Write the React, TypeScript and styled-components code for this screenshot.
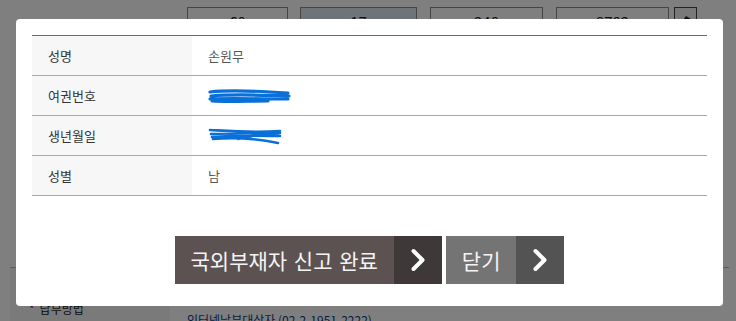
import React from "react";
import styled, { createGlobalStyle } from "styled-components";

const GlobalStyle = createGlobalStyle`
  html, body {
    margin: 0;
    padding: 0;
    background: #ffffff;
    font-family: "Noto Sans CJK KR", "Noto Sans", sans-serif;
    overflow: hidden;
  }
`;

// ---- page behind the dialog ----
const Page = styled.div`
  width: 736px;
  height: 321px;
  display: flex;
  flex-direction: column;
  overflow: hidden;
`;

const PhoneRow = styled.div`
  display: flex;
  align-items: flex-start;
  flex-shrink: 0;
  height: 268px;
  box-sizing: border-box;
  padding: 7px 0 0 177px;
  margin: 0 7px 0 10px;
  border-bottom: 1px solid #bdbdbd;
`;

const PhoneInput = styled.div<{ $w: number; $active?: boolean }>`
  width: ${(p) => p.$w}px;
  height: 32px;
  box-sizing: border-box;
  border: 1px solid #8a8a8a;
  background: ${(p) => (p.$active ? "#dce8f5" : "#ffffff")};
  color: #222;
  font-size: 15px;
  text-align: center;
  line-height: 28px;
`;

const Dash = styled.span<{ $w: number }>`
  width: ${(p) => p.$w}px;
  text-align: center;
  font-size: 13px;
  color: #222;
  line-height: 26px;
`;

const SmallButton = styled.div`
  width: 23px;
  height: 24px;
  margin-left: 5px;
  box-sizing: border-box;
  border: 1px solid #444;
  background: #f2f2f2;
  display: flex;
  align-items: center;
  justify-content: center;
`;

const InfoRow = styled.div`
  display: grid;
  grid-template-columns: 160px 1fr;
  margin-left: 10px;
  flex: 1;
`;

const InfoHead = styled.div`
  background: #f4f4f4;
  padding: 34px 0 0 19px;
  font-size: 12px;
  color: #222;
  display: flex;
  gap: 5px;
  align-items: flex-start;
  line-height: 14px;
`;

const Required = styled.span`
  color: #d0021b;
`;

const InfoLink = styled.div`
  padding: 45px 0 0 17px;
  font-size: 12px;
  color: #0b3c8c;
  line-height: 14px;
  white-space: nowrap;
`;

// ---- dialog ----
const Dim = styled.div`
  position: fixed;
  inset: 0;
  background: rgba(0, 0, 0, 0.5);
`;

const Dialog = styled.div`
  position: fixed;
  left: 16px;
  top: 19px;
  width: 707px;
  height: 287px;
  box-sizing: border-box;
  background: #ffffff;
  border-radius: 4px;
  padding: 16px 16px 0;
  display: flex;
  flex-direction: column;
`;

const InfoTable = styled.div`
  display: grid;
  grid-template-columns: 160px 1fr;
  border-top: 1px solid #6a6a6a;
`;

const Label = styled.div`
  height: 39px;
  border-bottom: 1px solid #a9a9a9;
  background: #f7f7f7;
  padding-left: 16px;
  display: flex;
  align-items: center;
  font-size: 13px;
  color: #333;
`;

const Value = styled.div`
  height: 39px;
  border-bottom: 1px solid #a9a9a9;
  padding-left: 16px;
  display: flex;
  align-items: center;
  font-size: 13px;
  color: #555;
`;

const Actions = styled.div`
  display: flex;
  justify-content: center;
  gap: 4px;
  margin-top: 40px;
`;

const ActionButton = styled.button<{ $face: string; $tip: string }>`
  display: flex;
  align-items: stretch;
  height: 48px;
  padding: 0;
  border: 0;
  background: ${(p) => p.$face};
  color: #f4f4f4;
  font-family: "Noto Sans CJK KR", "Noto Sans", sans-serif;
  font-size: 21px;
  cursor: pointer;

  .caption {
    display: flex;
    align-items: center;
    padding: 0 16px 1px;
    word-spacing: 2px;
  }

  .tip {
    width: 48px;
    display: flex;
    align-items: center;
    justify-content: center;
    background: ${(p) => p.$tip};
  }
`;

const Chevron = () => (
  <svg width="16" height="24" viewBox="0 0 16 24">
    <polyline
      points="3.5,3 12.5,12 3.5,21"
      fill="none"
      stroke="#ffffff"
      strokeWidth="4"
      strokeLinecap="round"
      strokeLinejoin="round"
    />
  </svg>
);

const ScribbleA = () => (
  <svg width="84" height="16" viewBox="0 0 84 16">
    <path
      d="M2 4 C20 2, 50 3, 80 5 M3 8 C25 6, 55 7, 81 8 M2 11 C24 10, 52 11, 80 11 M4 13 C20 14, 40 13, 60 13"
      fill="none"
      stroke="#0a6fd6"
      strokeWidth="3.2"
      strokeLinecap="round"
    />
  </svg>
);

const ScribbleB = () => (
  <svg width="76" height="18" viewBox="0 0 76 18">
    <path
      d="M2 3 C20 4, 45 6, 72 4 M3 7 C25 6, 50 6, 70 7 M4 10 C30 8, 55 9, 72 9 M5 12 C25 10, 50 12, 70 16 M30 12 C45 8, 60 6, 72 6"
      fill="none"
      stroke="#0a6fd6"
      strokeWidth="2.6"
      strokeLinecap="round"
    />
  </svg>
);

const rows: { label: string; value: React.ReactNode }[] = [
  { label: "성명", value: "손원무" },
  { label: "여권번호", value: <ScribbleA /> },
  { label: "생년월일", value: <ScribbleB /> },
  { label: "성별", value: "남" },
];

export default function App() {
  return (
    <>
      <GlobalStyle />
      <Page>
        <PhoneRow>
          <PhoneInput $w={101}>60</PhoneInput>
          <Dash $w={12}>-</Dash>
          <PhoneInput $w={117} $active>17</PhoneInput>
          <Dash $w={13}>-</Dash>
          <PhoneInput $w={113}>240</PhoneInput>
          <Dash $w={13}>-</Dash>
          <PhoneInput $w={113}>8702</PhoneInput>
          <SmallButton>
            <svg width="12" height="10" viewBox="0 0 12 10">
              <path d="M1 9 L6 2 L11 5 L8 9 Z" fill="#222" />
            </svg>
          </SmallButton>
        </PhoneRow>
        <InfoRow>
          <InfoHead>
            <Required>*</Required>
            <span>납부방법</span>
          </InfoHead>
          <InfoLink>인터넷납부대상자 (02-2-1951-2222)</InfoLink>
        </InfoRow>
      </Page>

      <Dim />
      <Dialog>
        <InfoTable>
          {rows.map((r) => (
            <React.Fragment key={r.label}>
              <Label>{r.label}</Label>
              <Value>{r.value}</Value>
            </React.Fragment>
          ))}
        </InfoTable>
        <Actions>
          <ActionButton $face="#5c5252" $tip="#3e3938">
            <span className="caption">국외부재자 신고 완료</span>
            <span className="tip">
              <Chevron />
            </span>
          </ActionButton>
          <ActionButton $face="#747474" $tip="#535353">
            <span className="caption">닫기</span>
            <span className="tip">
              <Chevron />
            </span>
          </ActionButton>
        </Actions>
      </Dialog>
    </>
  );
}
